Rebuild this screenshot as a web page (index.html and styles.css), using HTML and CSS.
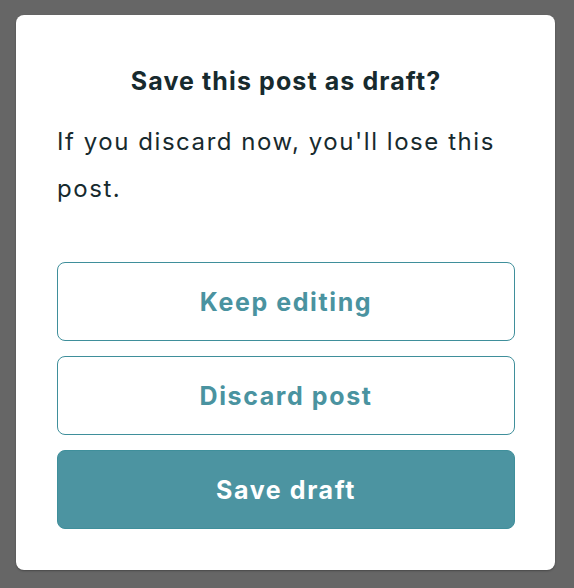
FILE: index.html
```html
<!DOCTYPE html>
<html>
<head>
<meta charset="utf-8">
<link rel="stylesheet" href="styles.css">
</head>
<body>
<div class="dialog">
  <h1 class="title">Save this post as draft?</h1>
  <p class="message">If you discard now, you'll lose this post.</p>
  <div class="actions">
    <button class="btn btn-outline">Keep editing</button>
    <button class="btn btn-outline">Discard post</button>
    <button class="btn btn-primary">Save draft</button>
  </div>
</div>
</body>
</html>
```
FILE: styles.css
```css
html, body {
  margin: 0;
  padding: 0;
  background: #666666;
  height: 100%;
}
body {
  padding: 15px 19px 18px 16px;
  box-sizing: border-box;
  font-family: "Inter", "Noto Sans", sans-serif;
}
.dialog {
  background: #ffffff;
  border-radius: 8px;
  width: 539px;
  height: 555px;
  box-sizing: border-box;
  padding: 0 40px 41px 41px;
  display: flex;
  flex-direction: column;
  box-shadow: 0 1px 2px rgba(0,0,0,0.3);
}
.title {
  margin: 0;
  padding-top: 50px;
  font-size: 25px;
  line-height: 32px;
  font-weight: 700;
  letter-spacing: 1.1px;
  color: #172a2e;
  text-align: center;
}
.message {
  margin: 21px 0 0 0;
  font-size: 24px;
  line-height: 47px;
  font-weight: 400;
  letter-spacing: 1.55px;
  color: #172a2e;
}
.actions {
  margin-top: auto;
  display: flex;
  flex-direction: column;
  gap: 15px;
}
.btn {
  height: 79px;
  border-radius: 8px;
  font-family: inherit;
  font-size: 25px;
  font-weight: 700;
  letter-spacing: 1.6px;
  cursor: pointer;
}
.btn-outline {
  background: #ffffff;
  border: 1.5px solid #3f8f9b;
  color: #4a93a0;
}
.btn-primary {
  background: #4c94a1;
  border: 1px solid #3f8f9b;
  color: #ffffff;
}
```
